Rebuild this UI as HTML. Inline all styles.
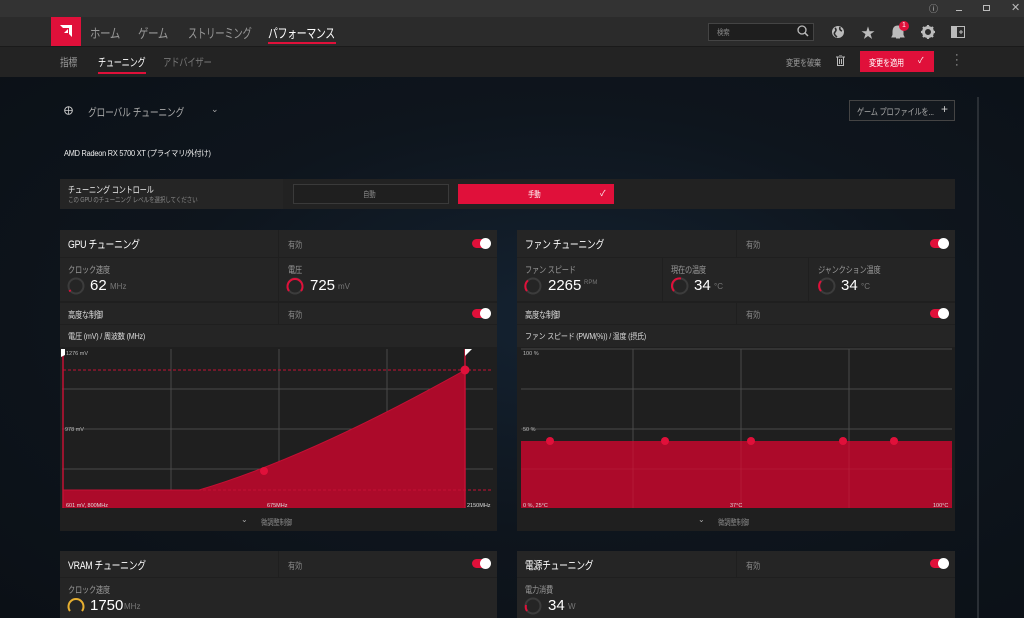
<!DOCTYPE html>
<html><head><meta charset="utf-8"><style>
*{margin:0;padding:0;box-sizing:border-box}
body{width:1024px;height:618px;overflow:hidden;position:relative;background:#0d131a;font-family:"Liberation Sans","Noto Sans CJK JP",sans-serif;color:#ddd}
.a{position:absolute}
.t{position:absolute;white-space:nowrap;letter-spacing:-0.03em;transform:scaleX(0.8);transform-origin:0 50%}
.n{transform:none;letter-spacing:0}
.p{position:absolute;background:#222}
.cell{position:absolute;background:#252525}
.tg{position:absolute;width:18px;height:9px;border-radius:5px;background:#e0103a}
.tg:after{content:"";position:absolute;right:-1px;top:-1px;width:11px;height:11px;border-radius:50%;background:#fff}
.lbl{font-size:9px;color:#999}
.big{font-size:15px;color:#fff;letter-spacing:0;transform:none}
.unit{font-size:8px;color:#777;letter-spacing:0;transform:none}
</style></head><body>
<div class="a" style="left:0;top:0;width:1024px;height:17px;background:#333"></div>
<div class="a" style="left:0;top:17px;width:1024px;height:29px;background:#2b2b2b"></div>
<div class="a" style="left:0;top:46px;width:1024px;height:31px;background:#232323;border-top:1px solid #1a1a1a"></div>
<div class="a" style="left:0;top:77px;width:1024px;height:541px;background:radial-gradient(ellipse at 55% 45%,#142231 0%,#0e151d 50%,#0b1016 100%)"></div>
<!-- window controls -->
<div class="t n" style="left:929px;top:2px;font-size:9px;color:#bbb">ⓘ</div>
<div class="a" style="left:956px;top:10px;width:6px;height:1px;background:#bbb"></div>
<div class="a" style="left:983px;top:5px;width:7px;height:6px;border:1px solid #bbb"></div>
<div class="t n" style="left:1011px;top:1px;font-size:11px;color:#bbb">✕</div>
<!-- logo -->
<div class="a" style="left:51px;top:17px;width:30px;height:29px;background:#e0103a"></div>
<svg class="a" style="left:58px;top:24px" width="16" height="15" viewBox="0 0 16 15"><path d="M2 1h12v12l-3-3V4H5z M2 13l4-4h4v-4l-4 4z" fill="#fff"/></svg>
<div class="t" style="left:90px;top:23px;font-size:13px;color:#999">ホーム</div>
<div class="t" style="left:138px;top:23px;font-size:13px;color:#999">ゲーム</div>
<div class="t" style="left:188px;top:23px;font-size:13px;color:#999;transform:scaleX(0.72)">ストリーミング</div>
<div class="t" style="left:268px;top:23px;font-size:13px;color:#fff;transform:scaleX(0.76)">パフォーマンス</div>
<div class="a" style="left:268px;top:42px;width:68px;height:2px;background:#e0103a"></div>
<!-- search -->
<div class="a" style="left:708px;top:23px;width:106px;height:18px;background:#1e1e1e;border:1px solid #444"></div>
<div class="t" style="left:717px;top:27px;font-size:8px;color:#888">検索</div>
<svg class="a" style="left:797px;top:25px" width="12" height="12"><circle cx="5" cy="5" r="4" stroke="#bbb" stroke-width="1.3" fill="none"/><path d="M8 8l3 3" stroke="#bbb" stroke-width="1.5"/></svg>
<svg class="a" style="left:831px;top:25px" width="14" height="14"><circle cx="7" cy="7" r="6" fill="#bbb"/><path d="M4 3q2 2 0 4t2 5M9 2q-1 3 2 4" stroke="#2b2b2b" stroke-width="1.6" fill="none"/></svg>
<div class="t n" style="left:861px;top:23px;font-size:14px;color:#bbb">★</div>
<svg class="a" style="left:891px;top:25px" width="14" height="14"><path d="M7 1q-5 0-5 6v3l-1 2h12l-1-2V7q0-6-5-6zM5 13h4" fill="#bbb" stroke="#bbb"/></svg>
<div class="a" style="left:899px;top:21px;width:10px;height:10px;border-radius:50%;background:#e0103a;font-size:7px;color:#fff;text-align:center;line-height:10px">1</div>
<svg class="a" style="left:921px;top:25px" width="14" height="14" viewBox="0 0 14 14"><circle cx="7" cy="7" r="4.5" fill="none" stroke="#bbb" stroke-width="3"/><path d="M7 0v3M7 11v3M0 7h3M11 7h3M2 2l2 2M10 10l2 2M12 2l-2 2M2 12l2-2" stroke="#bbb" stroke-width="2.2"/></svg>
<svg class="a" style="left:951px;top:26px" width="14" height="12"><rect x="0.5" y="0.5" width="13" height="11" fill="none" stroke="#bbb"/><rect x="1" y="1" width="5" height="10" fill="#bbb"/><path d="M8 6h4M10 4v4" stroke="#bbb"/></svg>
<!-- subnav -->
<div class="t" style="left:60px;top:54px;font-size:11px;color:#999">指標</div>
<div class="t" style="left:98px;top:54px;font-size:11px;color:#fff;transform:scaleX(0.74)">チューニング</div>
<div class="a" style="left:98px;top:72px;width:48px;height:2px;background:#e0103a"></div>
<div class="t" style="left:163px;top:54px;font-size:11px;color:#777;transform:scaleX(0.76)">アドバイザー</div>
<div class="t" style="left:786px;top:56px;font-size:9px;color:#999">変更を破棄</div>
<svg class="a" style="left:836px;top:55px" width="9" height="11"><path d="M0 2h9M3 0h3M1.5 2v8.5h6V2M3.5 4v5M5.5 4v5" stroke="#bbb" fill="none"/></svg>
<div class="a" style="left:860px;top:51px;width:74px;height:21px;background:#e0103a"></div>
<div class="t" style="left:869px;top:56px;font-size:9px;color:#fff">変更を適用</div>
<div class="t n" style="left:918px;top:55px;font-size:8px;color:#fff">✓</div>
<div class="t n" style="left:955px;top:53px;font-size:11px;color:#bbb;line-height:5px">·<br>·<br>·</div>
<div class="a" style="left:977px;top:97px;width:2px;height:521px;background:#2a2f35"></div>
<!-- global tuning -->
<svg class="a" style="left:64px;top:106px" width="9" height="9"><circle cx="4.5" cy="4.5" r="3.8" fill="none" stroke="#ccc"/><path d="M0.7 4.5h7.6M4.5 0.7v7.6" stroke="#ccc" stroke-width="0.8"/></svg>
<div class="t" style="left:88px;top:104px;font-size:11px;color:#aaa">グローバル チューニング</div>
<div class="t n" style="left:211px;top:104px;font-size:9px;color:#aaa">⌄</div>
<div class="a" style="left:849px;top:100px;width:106px;height:21px;border:1px solid #444;background:#13181e"></div>
<div class="t" style="left:857px;top:105px;font-size:9px;color:#aaa">ゲーム プロファイルを...</div>
<div class="t n" style="left:941px;top:102px;font-size:12px;color:#ccc">+</div>
<div class="t" style="left:64px;top:148px;font-size:8px;color:#eee;transform:scaleX(0.92)">AMD Radeon RX 5700 XT (プライマリ/外付け)</div>
<!-- tuning control -->
<div class="p" style="left:60px;top:179px;width:895px;height:30px"></div>
<div class="cell" style="left:60px;top:179px;width:223px;height:30px"></div>
<div class="t" style="left:68px;top:183px;font-size:9px;color:#eee">チューニング コントロール</div>
<div class="t" style="left:68px;top:195px;font-size:7px;color:#888">この GPU のチューニング レベルを選択してください</div>
<div class="a" style="left:293px;top:184px;width:156px;height:20px;border:1px solid #3a3a3a;background:#1f1f1f"></div>
<div class="t" style="left:363px;top:189px;font-size:8px;color:#888">自動</div>
<div class="a" style="left:458px;top:184px;width:156px;height:20px;background:#e0103a"></div>
<div class="t" style="left:528px;top:189px;font-size:8px;color:#fff">手動</div>
<div class="t n" style="left:600px;top:188px;font-size:8px;color:#fff">✓</div>

<!-- GPU panel -->
<div class="p" style="left:60px;top:230px;width:437px;height:301px;background:#1f1f1f"></div>
<div class="cell" style="left:60px;top:230px;width:218px;height:27px"></div>
<div class="cell" style="left:279px;top:230px;width:218px;height:27px"></div>
<div class="t" style="left:68px;top:236px;font-size:11px;color:#fff">GPU チューニング</div>
<div class="t" style="left:288px;top:238px;font-size:9px;color:#888">有効</div>
<div class="tg" style="left:472px;top:239px"></div>
<div class="cell" style="left:60px;top:258px;width:218px;height:43px"></div>
<div class="cell" style="left:279px;top:258px;width:218px;height:43px"></div>
<div class="t lbl" style="left:68px;top:263px;font-size:9px">クロック速度</div>
<svg class="a" style="left:67px;top:277px" width="18" height="18"><circle cx="9" cy="9" r="7.5" fill="none" stroke="#3c3c3c" stroke-width="2"/><path d="M2.5 13 A7.5 7.5 0 0 0 3.5 14.5" stroke="#e0103a" stroke-width="2" fill="none"/></svg>
<div class="t big" style="left:90px;top:277px">62</div><div class="t unit" style="left:110px;top:282px">MHz</div>
<div class="t lbl" style="left:288px;top:263px;font-size:9px">電圧</div>
<svg class="a" style="left:286px;top:277px" width="18" height="18"><circle cx="9" cy="9" r="7.5" fill="none" stroke="#3c3c3c" stroke-width="2"/><path d="M3 14 A7.5 7.5 0 1 1 15 14" stroke="#e0103a" stroke-width="2" fill="none"/></svg>
<div class="t big" style="left:310px;top:277px">725</div><div class="t unit" style="left:338px;top:282px">mV</div>
<div class="cell" style="left:60px;top:303px;width:218px;height:21px"></div>
<div class="cell" style="left:279px;top:303px;width:218px;height:21px"></div>
<div class="t" style="left:68px;top:308px;font-size:9px;color:#ddd">高度な制御</div>
<div class="t" style="left:288px;top:308px;font-size:9px;color:#888">有効</div>
<div class="tg" style="left:472px;top:309px"></div>
<div class="cell" style="left:60px;top:325px;width:437px;height:22px"></div>
<div class="t" style="left:68px;top:331px;font-size:8px;color:#ddd;transform:scaleX(0.9)">電圧 (mV) / 周波数 (MHz)</div>
<svg class="a" style="left:60px;top:347px" width="437" height="163">
<rect width="437" height="163" fill="#1f1f1f"/>
<g stroke="#4a4a4a" stroke-width="1"><path d="M111 2V161M219 2V161M327 2V161M2 42H433M2 82H433M2 122H433"/></g>
<path d="M3 143H139Q250 110 405 23V161H3Z" fill="#ac0a2a"/>
<path d="M3 143H139Q250 110 405 23" stroke="#c41034" fill="none"/>
<path d="M3 23H433M3 143H433" stroke="#c41034" stroke-dasharray="3 2"/>
<path d="M3 2V161M405 2V161" stroke="#c41034" stroke-width="1.5"/>
<circle cx="204" cy="124" r="4" fill="#e0103a"/><circle cx="405" cy="23" r="4.5" fill="#e0103a"/>
<path d="M1 2h4v6l-4 2z" fill="#fff"/><path d="M405 2h7l-7 7z" fill="#fff"/>
<text x="6" y="8" font-size="5.5" fill="#bbb">1276 mV</text>
<text x="5" y="84" font-size="5.5" fill="#bbb">978 mV</text>
<text x="6" y="160" font-size="5.5" fill="#ddd">601 mV, 800MHz</text>
<text x="207" y="160" font-size="5.5" fill="#ddd">675MHz</text>
<text x="407" y="160" font-size="5.5" fill="#ddd">2150MHz</text>
</svg>
<div class="t n" style="left:241px;top:515px;font-size:8px;color:#aaa">⌄</div>
<div class="t" style="left:261px;top:517px;font-size:8px;color:#888">微調整制御</div>

<!-- Fan panel -->
<div class="p" style="left:517px;top:230px;width:438px;height:301px;background:#1f1f1f"></div>
<div class="cell" style="left:517px;top:230px;width:219px;height:27px"></div>
<div class="cell" style="left:737px;top:230px;width:218px;height:27px"></div>
<div class="t" style="left:525px;top:236px;font-size:11px;color:#fff">ファン チューニング</div>
<div class="t" style="left:746px;top:238px;font-size:9px;color:#888">有効</div>
<div class="tg" style="left:930px;top:239px"></div>
<div class="cell" style="left:517px;top:258px;width:145px;height:43px"></div>
<div class="cell" style="left:663px;top:258px;width:145px;height:43px"></div>
<div class="cell" style="left:809px;top:258px;width:146px;height:43px"></div>
<div class="t lbl" style="left:525px;top:263px;font-size:9px">ファン スピード</div>
<div class="t lbl" style="left:671px;top:263px;font-size:9px">現在の温度</div>
<div class="t lbl" style="left:818px;top:263px;font-size:9px">ジャンクション温度</div>
<svg class="a" style="left:524px;top:277px" width="18" height="18"><circle cx="9" cy="9" r="7.5" fill="none" stroke="#3c3c3c" stroke-width="2"/><path d="M3 14 A7.5 7.5 0 0 1 4 3.5" stroke="#e0103a" stroke-width="2" fill="none"/></svg>
<div class="t big" style="left:548px;top:277px">2265</div><div class="t unit" style="left:584px;top:280px;font-size:6px">RPM</div>
<svg class="a" style="left:671px;top:277px" width="18" height="18"><circle cx="9" cy="9" r="7.5" fill="none" stroke="#3c3c3c" stroke-width="2"/><path d="M3 14 A7.5 7.5 0 0 1 10 1.5" stroke="#e0103a" stroke-width="2" fill="none"/></svg>
<div class="t big" style="left:694px;top:277px">34</div><div class="t unit" style="left:714px;top:282px">°C</div>
<svg class="a" style="left:818px;top:277px" width="18" height="18"><circle cx="9" cy="9" r="7.5" fill="none" stroke="#3c3c3c" stroke-width="2"/><path d="M3 14 A7.5 7.5 0 0 1 3 4" stroke="#e0103a" stroke-width="2" fill="none"/></svg>
<div class="t big" style="left:841px;top:277px">34</div><div class="t unit" style="left:861px;top:282px">°C</div>
<div class="cell" style="left:517px;top:303px;width:219px;height:21px"></div>
<div class="cell" style="left:737px;top:303px;width:218px;height:21px"></div>
<div class="t" style="left:525px;top:308px;font-size:9px;color:#ddd">高度な制御</div>
<div class="t" style="left:746px;top:308px;font-size:9px;color:#888">有効</div>
<div class="tg" style="left:930px;top:309px"></div>
<div class="cell" style="left:517px;top:325px;width:438px;height:22px"></div>
<div class="t" style="left:525px;top:331px;font-size:8px;color:#ddd;transform:scaleX(0.88)">ファン スピード (PWM(%)) / 温度 (摂氏)</div>
<svg class="a" style="left:517px;top:347px" width="438" height="163">
<rect width="438" height="163" fill="#1f1f1f"/>
<g stroke="#4a4a4a"><path d="M4 2H435M4 42H435M4 82H435M4 122H435M116 2V161M224 2V161M332 2V161"/></g>
<rect x="4" y="94" width="431" height="67" fill="#ac0a2a"/>
<g stroke="#b8243f" stroke-width="0.6"><path d="M4 122H435M116 94V161M224 94V161M332 94V161"/></g>
<g fill="#e0103a"><circle cx="33" cy="94" r="4"/><circle cx="148" cy="94" r="4"/><circle cx="234" cy="94" r="4"/><circle cx="326" cy="94" r="4"/><circle cx="377" cy="94" r="4"/></g>
<text x="6" y="8" font-size="5.5" fill="#bbb">100 %</text>
<text x="6" y="84" font-size="5.5" fill="#bbb">50 %</text>
<text x="6" y="160" font-size="5.5" fill="#ddd">0 %, 25°C</text>
<text x="213" y="160" font-size="5.5" fill="#ddd">37°C</text>
<text x="416" y="160" font-size="5.5" fill="#ddd">100°C</text>
</svg>
<div class="t n" style="left:698px;top:515px;font-size:8px;color:#aaa">⌄</div>
<div class="t" style="left:718px;top:517px;font-size:8px;color:#888">微調整制御</div>

<!-- VRAM -->
<div class="p" style="left:60px;top:551px;width:437px;height:67px;background:#1f1f1f"></div>
<div class="cell" style="left:60px;top:551px;width:218px;height:26px"></div>
<div class="cell" style="left:279px;top:551px;width:218px;height:26px"></div>
<div class="t" style="left:68px;top:557px;font-size:11px;color:#fff">VRAM チューニング</div>
<div class="t" style="left:288px;top:559px;font-size:9px;color:#888">有効</div>
<div class="tg" style="left:472px;top:559px"></div>
<div class="cell" style="left:60px;top:578px;width:437px;height:40px"></div>
<div class="t lbl" style="left:68px;top:583px;font-size:9px">クロック速度</div>
<svg class="a" style="left:67px;top:597px" width="18" height="18"><path d="M3 14 A7.5 7.5 0 1 1 15 14" stroke="#e8b030" stroke-width="2" fill="none"/></svg>
<div class="t big" style="left:90px;top:597px">1750</div><div class="t unit" style="left:124px;top:602px">MHz</div>
<!-- Power -->
<div class="p" style="left:517px;top:551px;width:438px;height:67px;background:#1f1f1f"></div>
<div class="cell" style="left:517px;top:551px;width:219px;height:26px"></div>
<div class="cell" style="left:737px;top:551px;width:218px;height:26px"></div>
<div class="t" style="left:525px;top:557px;font-size:11px;color:#fff">電源チューニング</div>
<div class="t" style="left:746px;top:559px;font-size:9px;color:#888">有効</div>
<div class="tg" style="left:930px;top:559px"></div>
<div class="cell" style="left:517px;top:578px;width:438px;height:40px"></div>
<div class="t lbl" style="left:525px;top:583px;font-size:9px">電力消費</div>
<svg class="a" style="left:524px;top:597px" width="18" height="18"><circle cx="9" cy="9" r="7.5" fill="none" stroke="#3c3c3c" stroke-width="2"/><path d="M3 14 A7.5 7.5 0 0 1 2 8" stroke="#e0103a" stroke-width="2" fill="none"/></svg>
<div class="t big" style="left:548px;top:597px">34</div><div class="t unit" style="left:568px;top:602px">W</div>
</body></html>
